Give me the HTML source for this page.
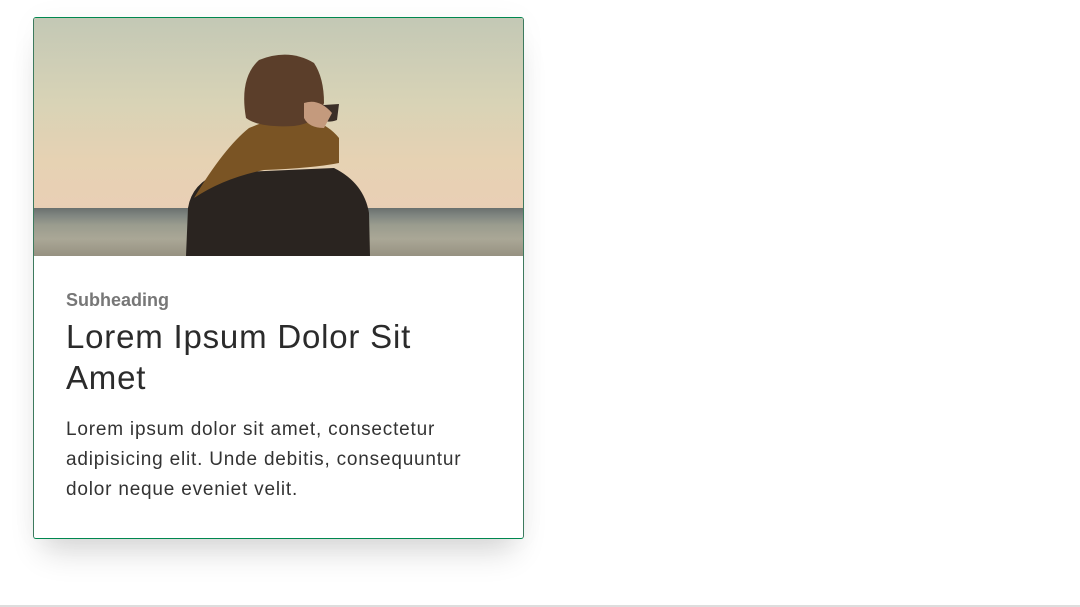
<!DOCTYPE html>
<html><head><style>
html,body{margin:0;padding:0;background:#fff;width:1080px;height:607px;overflow:hidden;position:relative}
.card{position:absolute;left:33px;top:17px;width:489px;height:520px;border:1px solid #3d7a5e;border-top-color:#00874f;border-bottom-color:#00874f;border-radius:3px;background:#fff;box-shadow:0 22px 30px -10px rgba(0,0,0,.16),0 0 30px rgba(0,0,0,.03);overflow:hidden}
.img{position:absolute;left:0;top:0;width:489px;height:238px;background:linear-gradient(180deg,#c3c8b5 0%,#d8d3b6 35%,#e6d2b3 60%,#e9cfb5 78%,#d9c5ae 100%);overflow:hidden}
.sea{position:absolute;left:0;top:190px;width:489px;height:48px;background:linear-gradient(180deg,#6a706e 0%,#7f8580 15%,#9a9c8e 35%,#aaa796 65%,#969181 100%)}
.t{position:absolute;left:32px;color:#2b2b2b;font-family:"Liberation Sans",sans-serif;white-space:nowrap}
.line{position:absolute;left:0;top:605px;width:1080px;height:2px;background:#ddd}
</style></head><body>
<div class="card">
 <div class="img">
  <div class="sea"></div>
  <svg width="489" height="238" style="position:absolute;left:0;top:0">
   <path d="M152 238 L154 190 Q158 165 185 155 L300 150 Q330 165 335 195 L336 238 Z" fill="#2a2420"/>
   <path d="M160 180 Q190 130 215 110 L240 100 Q285 95 305 120 L305 145 Q280 150 230 152 Q190 160 160 180Z" fill="#7a5424"/>
   <path d="M212 100 Q205 60 225 42 Q255 30 280 45 Q290 60 290 85 Q285 105 260 108 Q225 110 212 100Z" fill="#5b3e2a"/>
   <path d="M275 88 L305 86 L303 102 Q292 106 285 100Z" fill="#3a2e27"/>
   <path d="M270 85 Q285 80 298 95 L290 110 Q275 110 270 100Z" fill="#c49a7d"/>
  </svg>
 </div>
 <div class="t" style="top:272px;font-size:18px;font-weight:bold;color:#777">Subheading</div>
 <div class="t" style="top:298px;font-size:33px;line-height:41px;letter-spacing:.8px;color:#2b2b2b">Lorem Ipsum Dolor Sit<br>Amet</div>
 <div class="t" style="top:397px;font-size:19px;line-height:30px;letter-spacing:.8px;color:#333">Lorem ipsum dolor sit amet, consectetur<br>adipisicing elit. Unde debitis, consequuntur<br>dolor neque eveniet velit.</div>
</div>
<div class="line"></div>
</body></html>
